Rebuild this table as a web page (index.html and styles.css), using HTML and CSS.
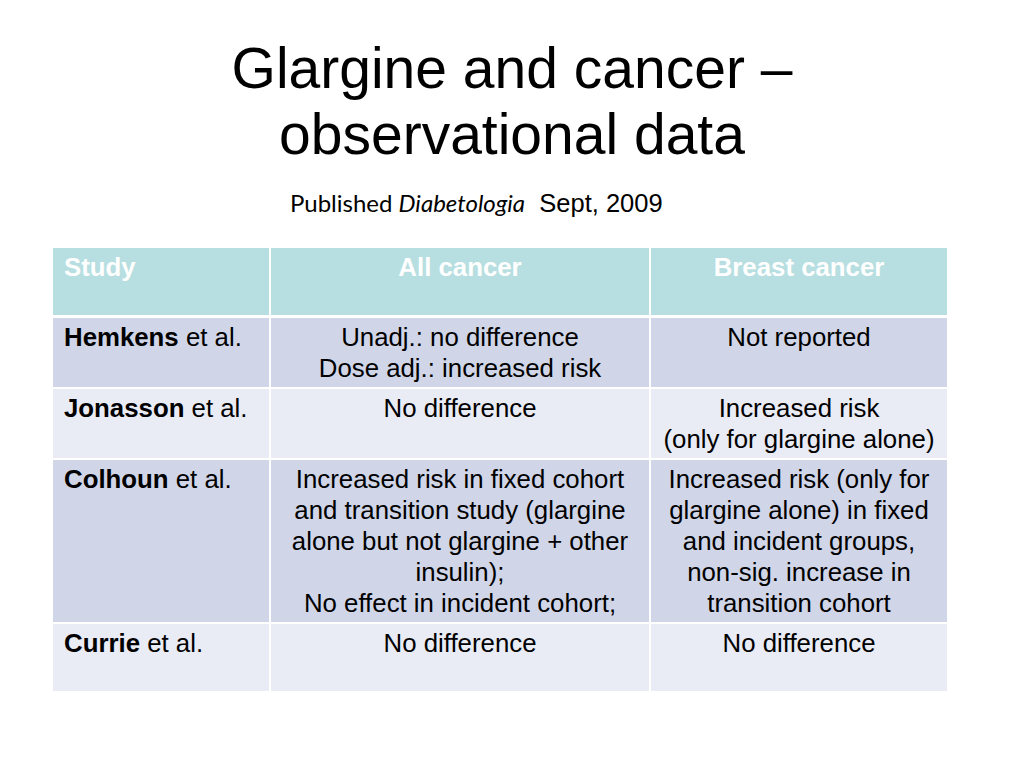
FILE: index.html
```html
<!DOCTYPE html>
<html>
<head>
<meta charset="utf-8">
<link rel="stylesheet" href="styles.css">
</head>
<body>
<div class="slide">
  <h1 class="title">Glargine and cancer –<br>observational data</h1>
  <p class="subtitle"><span class="calibri">Published <em>Diabetologia</em></span>&nbsp; Sept, 2009</p>
  <div class="table">
    <div class="cell head left">Study</div>
    <div class="cell head">All cancer</div>
    <div class="cell head">Breast cancer</div>

    <div class="cell odd left"><b>Hemkens</b> et al.</div>
    <div class="cell odd">Unadj.: no difference<br>Dose adj.: increased risk</div>
    <div class="cell odd">Not reported</div>

    <div class="cell even left"><b>Jonasson</b> et al.</div>
    <div class="cell even">No difference</div>
    <div class="cell even">Increased risk<br>(only for glargine alone)</div>

    <div class="cell odd left"><b>Colhoun</b> et al.</div>
    <div class="cell odd">Increased risk in fixed cohort<br>and transition study (glargine<br>alone but not glargine + other<br>insulin);<br>No effect in incident cohort;</div>
    <div class="cell odd">Increased risk (only for<br>glargine alone) in fixed<br>and incident groups,<br>non-sig. increase in<br>transition cohort</div>

    <div class="cell even left"><b>Currie</b> et al.</div>
    <div class="cell even">No difference</div>
    <div class="cell even">No difference</div>
  </div>
</div>
</body>
</html>
```

FILE: styles.css
```css
html, body {
  margin: 0;
  padding: 0;
  background: #ffffff;
}
.slide {
  width: 1024px;
  height: 768px;
  position: relative;
  overflow: hidden;
  font-family: "Liberation Sans", Arial, sans-serif;
  color: #000;
}
.title {
  margin: 0;
  padding-top: 35px;
  font-weight: normal;
  font-size: 57px;
  line-height: 66px;
  text-align: center;
}
.subtitle {
  margin: 21px 0 0 290px;
  font-size: 25.5px;
  line-height: 30px;
  white-space: nowrap;
}
.calibri {
  font-family: Lato, "Open Sans", sans-serif;
  font-size: 24px;
}
.calibri em {
  font-style: italic;
}
.table {
  margin: 30px 0 0 53px;
  display: grid;
  grid-template-columns: 216px 378px 296px;
  column-gap: 2px;
  row-gap: 2px;
  width: 894px;
}
.cell {
  font-size: 25.8px;
  line-height: 31px;
  text-align: center;
  padding: 4px 4px 3px;
  min-height: 60px;
}
.cell.left {
  text-align: left;
  padding-left: 11px;
}
.head {
  background: #b7dee0;
  color: #ffffff;
  font-weight: bold;
  margin-bottom: 1px;
}
.odd {
  background: #d0d6e8;
}
.even {
  background: #e9ebf5;
}
```
